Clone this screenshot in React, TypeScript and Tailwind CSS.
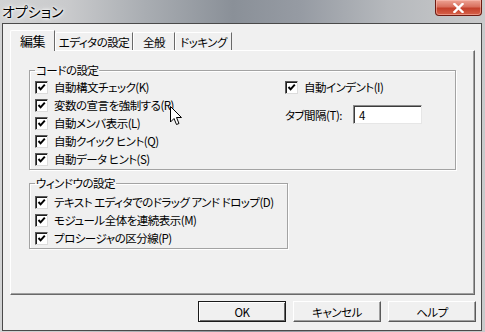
import React from "react";

const font =
  "font-['Noto_Sans_CJK_JP','Noto_Sans',sans-serif] [font-feature-settings:'palt'] text-[11.5px] leading-[12px] tracking-[-0.5px] text-black";

function CheckBox({ label }: { label: string }) {
  return (
    <div className="flex h-[18px] items-center gap-[6px] whitespace-nowrap">
      <span className="flex h-[13px] w-[13px] shrink-0 items-center justify-center border border-t-[#5a5a5a] border-l-[#5a5a5a] border-r-[#dcdcdc] border-b-[#dcdcdc] bg-white shadow-[inset_1px_1px_0_#1e1e1e]">
        <svg width="9" height="9" viewBox="0 0 9 9">
          <path d="M1.5 4 L3.6 6.3 L7.8 1.6" stroke="#000" strokeWidth="2" fill="none" />
        </svg>
      </span>
      <span>{label}</span>
    </div>
  );
}

function GroupBox({
  title,
  className,
  children,
}: {
  title: string;
  className: string;
  children: React.ReactNode;
}) {
  return (
    <fieldset
      className={`min-w-0 border border-[#a3a3a3] px-[5px] shadow-[inset_1px_1px_0_#fff,1px_1px_0_#fff] ${className}`}
    >
      <legend className="px-[1px] leading-[12px]">{title}</legend>
      {children}
    </fieldset>
  );
}

function Tab({
  label,
  width,
  active,
}: {
  label: string;
  width: string;
  active?: boolean;
}) {
  if (active) {
    return (
      <div
        className={`relative z-10 -mb-px flex h-[21px] items-center justify-center whitespace-nowrap rounded-tl-[2px] border-l border-t border-l-white border-t-white border-r border-r-[#696969] bg-[#f0f0f0] pb-[1px] text-[13px] ${width}`}
      >
        {label}
      </div>
    );
  }
  return (
    <div
      className={`flex h-[18px] items-center justify-center whitespace-nowrap rounded-tl-[2px] border-l border-t border-l-white border-t-white border-r border-r-[#696969] bg-[#f0f0f0] ${width}`}
    >
      {label}
    </div>
  );
}

function Button({ label, isDefault }: { label: string; isDefault?: boolean }) {
  return (
    <button
      className={`flex h-[21px] w-[88px] items-center justify-center bg-[#f0f0f0] ${
        isDefault
          ? "border border-[#1a1a1a] shadow-[inset_1px_1px_0_#fff,inset_-1px_-1px_0_#696969]"
          : "border border-t-white border-l-white border-r-[#5a5a5a] border-b-[#5a5a5a] shadow-[inset_-1px_-1px_0_#a0a0a0]"
      }`}
    >
      {label}
    </button>
  );
}

export default function App() {
  return (
    <div
      className={`relative flex h-[332px] w-[485px] flex-col overflow-hidden bg-[linear-gradient(90deg,#d2d3d4_0%,#c9cacc_14%,#a9adb2_30%,#8a9098_48%,#969ba3_62%,#b6b9bd_80%,#c9cacb_100%)] pb-[1px] pl-[2px] pr-[3px] ${font}`}
    >
      {/* title bar */}
      <div className="flex h-[23px] shrink-0 items-start justify-between">
        <span className="mt-[4px] text-[14px] leading-[14px] tracking-normal [text-shadow:0_0_6px_#fff,0_0_3px_#fff,0_0_2px_#fff]">
          オプション
        </span>
        <div className="flex h-[16px] w-[47px] items-center justify-center rounded-b-[4px] border border-t-0 border-[#6e1b12] bg-[linear-gradient(180deg,#eda394_0%,#d9705e_45%,#c4402b_55%,#d6624a_100%)] shadow-[inset_0_0_0_1px_rgba(255,200,190,0.5)]">
          <svg width="11" height="10" viewBox="0 0 11 10">
            <path d="M1.5 1 L9.5 9 M9.5 1 L1.5 9" stroke="#fff" strokeWidth="2.4" strokeLinecap="square" />
          </svg>
        </div>
      </div>

      {/* client area */}
      <div className="flex flex-1 flex-col border border-[#4a4a4a] bg-[#f0f0f0]">
        {/* tabs */}
        <div className="flex items-end pl-[7px] pt-[6px]">
          <Tab label="編集" width="w-[45px]" active />
          <Tab label="エディタの設定" width="w-[78px]" />
          <Tab label="全般" width="w-[42px]" />
          <Tab label="ドッキング" width="w-[57px]" />
        </div>

        {/* panel */}
        <div className="ml-[7px] mr-[6px] flex h-[245px] flex-col border border-t-white border-l-white border-r-[#696969] border-b-[#696969] pl-[18px] pt-[13px] shadow-[inset_-1px_-1px_0_#a0a0a0]">
          <GroupBox title="コードの設定" className="w-[427px] pb-[1px] pt-[2px]">
            <div className="flex">
              <div className="w-[250px]">
                <CheckBox label="自動構文チェック(K)" />
                <CheckBox label="変数の宣言を強制する(R)" />
                <CheckBox label="自動メンバ表示(L)" />
                <CheckBox label="自動クイック ヒント(Q)" />
                <CheckBox label="自動データ ヒント(S)" />
              </div>
              <div className="flex flex-col gap-[9px]">
                <CheckBox label="自動インデント(I)" />
                <div className="flex items-center gap-[11px]">
                  <span>タブ間隔(T):</span>
                  <div className="flex h-[19px] w-[69px] items-center border border-t-[#8a8a8a] border-l-[#8a8a8a] border-r-[#e6e6e6] border-b-[#e6e6e6] bg-white pl-[5px] shadow-[inset_1px_1px_0_#3c3c3c]">
                    4
                  </div>
                </div>
              </div>
            </div>
          </GroupBox>

          <GroupBox title="ウィンドウの設定" className="mt-[7px] w-[259px] pb-[1px] pt-[4px]">
            <CheckBox label="テキスト エディタでのドラッグ アンド ドロップ(D)" />
            <CheckBox label="モジュール全体を連続表示(M)" />
            <CheckBox label="プロシージャの区分線(P)" />
          </GroupBox>
        </div>

        {/* buttons */}
        <div className="mt-[6px] flex justify-end gap-[7px] pr-[5px]">
          <Button label="OK" isDefault />
          <Button label="キャンセル" />
          <Button label="ヘルプ" />
        </div>
      </div>

      {/* mouse cursor */}
      <svg
        className="absolute left-[170px] top-[106px]"
        width="13"
        height="20"
        viewBox="0 0 13 20"
      >
        <path
          d="M0.5 0.5 L0.5 16 L4 12.5 L6.5 18.5 L9 17.5 L6.5 11.5 L11.5 11.5 Z"
          fill="#fff"
          stroke="#000"
          strokeWidth="1"
        />
      </svg>
    </div>
  );
}
